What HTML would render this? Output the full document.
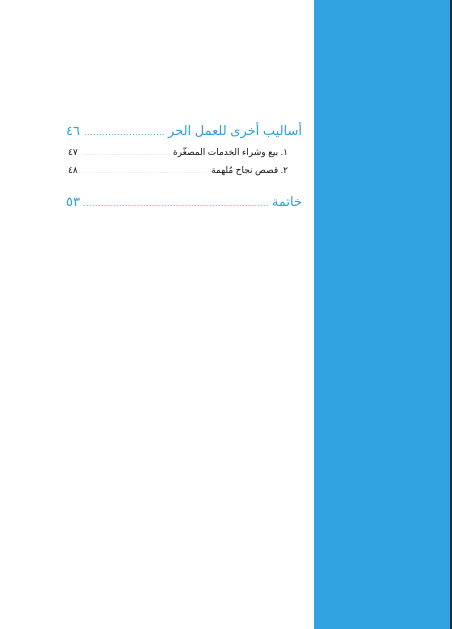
<!DOCTYPE html>
<html><head><meta charset="utf-8"><style>
body{margin:0;width:452px;height:629px;background:#fff;position:relative;overflow:hidden;font-family:"Liberation Sans","DejaVu Sans",sans-serif}
.blue{position:absolute;left:314px;top:0;width:136px;height:629px;background:#30a3e0}
.edge{position:absolute;left:450px;top:0;width:2px;height:629px;background:#1a2a30}
.row{position:absolute;left:66px;width:236px;display:flex;direction:rtl;align-items:baseline;white-space:nowrap}
.row .t{flex:none}
.row .d{flex:1;overflow:hidden;margin:0 3px;letter-spacing:0.5px}
.h .d{font-size:9px}
.row .n{flex:none}
.h{color:#2fa0dc;font-size:13px}
.s{color:#111;font-size:9px}
.s .d{color:#ccc;font-size:7px}
</style></head><body>
<div class="blue"></div><div class="edge"></div>
<div class="row h" style="top:123px"><span class="t">أساليب أخرى للعمل الحر</span><span class="d">..........................................................</span><span class="n">٤٦</span></div>
<div class="row s" style="top:147px;left:68px;width:220px"><span class="t">١. بيع وشراء الخدمات المصغّرة</span><span class="d">............................................................</span><span class="n">٤٧</span></div>
<div class="row s" style="top:165px;left:68px;width:220px"><span class="t">٢. قصص نجاح مُلهمة</span><span class="d">.......................................................................</span><span class="n">٤٨</span></div>
<div class="row h" style="top:194px"><span class="t">خاتمة</span><span class="d">...........................................................................................</span><span class="n">٥٣</span></div>
</body></html>
